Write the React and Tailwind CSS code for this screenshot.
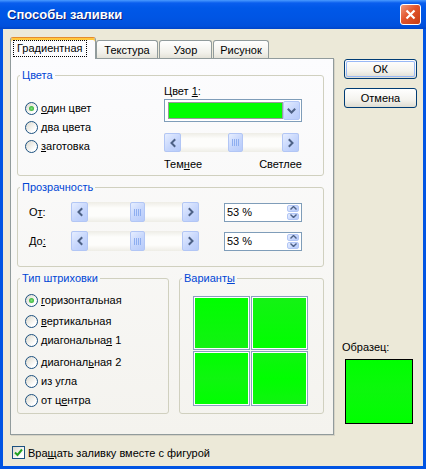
import React from 'react';

const blueBtn =
  'bg-[linear-gradient(135deg,#e6eeff,#c6d6fc_55%,#b7cbfa)] border border-[#b2c6f5] rounded-[2px]';

function Chevron({ dir }) {
  const d = {
    left: 'M6.5 3 L3.5 6 L6.5 9',
    right: 'M3.5 3 L6.5 6 L3.5 9',
    down: 'M2.5 4.5 L5.5 7.5 L8.5 4.5',
  }[dir];
  const w = dir === 'down' ? 11 : 10;
  return (
    <svg width={w} height="12" viewBox={`0 0 ${w} 12`}>
      <path d={d} fill="none" stroke="#4d6185" strokeWidth="2" strokeLinecap="square" />
    </svg>
  );
}

function ArrowBtn({ dir }) {
  return (
    <div className={`w-[17px] h-full flex items-center justify-center ${blueBtn}`}>
      <Chevron dir={dir} />
    </div>
  );
}

function Thumb() {
  return (
    <div className={`w-[15px] h-full flex items-center justify-center gap-[1px] ${blueBtn}`}>
      <span className="w-[1px] h-[7px] bg-[#8eaef0]" />
      <span className="w-[1px] h-[7px] bg-[#8eaef0]" />
      <span className="w-[1px] h-[7px] bg-[#8eaef0]" />
      <span className="w-[1px] h-[7px] bg-[#8eaef0]" />
    </div>
  );
}

function Slider({ size, offset }) {
  return (
    <div
      className={`flex ${size} bg-[linear-gradient(180deg,#eeede6,#fdfdfb_30%,#fdfdfb_70%,#eeede6)]`}
    >
      <ArrowBtn dir="left" />
      <div className="flex-1 flex">
        <div className={`h-full ${offset}`}>
          <Thumb />
        </div>
      </div>
      <ArrowBtn dir="right" />
    </div>
  );
}

function Spin({ className = '' }) {
  return (
    <div
      className={`w-[78px] h-[19px] border border-[#7f9db9] bg-white flex items-center pl-[2px] pr-[2px] ${className}`}
    >
      <span className="flex-1">53 %</span>
      <div className="w-[12px] h-[15px] flex flex-col gap-[1px]">
        <div className={`flex-1 flex items-center justify-center ${blueBtn}`}>
          <svg width="7" height="4" viewBox="0 0 7 4">
            <path d="M0.5 3.5 L3.5 0.5 L6.5 3.5" fill="none" stroke="#4d6185" strokeWidth="1.4" />
          </svg>
        </div>
        <div className={`flex-1 flex items-center justify-center ${blueBtn}`}>
          <svg width="7" height="4" viewBox="0 0 7 4">
            <path d="M0.5 0.5 L3.5 3.5 L6.5 0.5" fill="none" stroke="#4d6185" strokeWidth="1.4" />
          </svg>
        </div>
      </div>
    </div>
  );
}

function Radio({ checked, children, className = '' }) {
  return (
    <div className={`flex items-center h-[14px] ${className}`}>
      <span className="w-[13px] h-[13px] rounded-full border border-[#1c5180] bg-[linear-gradient(135deg,#dcd9cd,#ffffff_75%)] flex items-center justify-center">
        {checked && (
          <span className="w-[5px] h-[5px] rounded-full bg-[radial-gradient(circle,#7ce27a,#21a121)]" />
        )}
      </span>
      <span className="ml-[3px]">{children}</span>
    </div>
  );
}

function Group({ title, className = '', children }) {
  return (
    <fieldset className={`border border-[#d0d0bf] rounded-[3px] ${className}`}>
      <legend className="ml-[2px] px-[2px] leading-[13px] text-[#0046d5]">{title}</legend>
      {children}
    </fieldset>
  );
}

function Btn({ children, isDefault }) {
  return (
    <div className="w-[73px] h-[20px] rounded-[3px] border border-[#003c74] bg-[linear-gradient(180deg,#ffffff,#f4f3ee_60%,#dedcd1)] p-[1px]">
      <div
        className={`w-full h-full rounded-[2px] flex items-center justify-center ${
          isDefault ? 'shadow-[inset_0_0_0_1px_#98b8f6]' : ''
        }`}
      >
        {children}
      </div>
    </div>
  );
}

function Cell({ grad }) {
  return (
    <div className="border border-[#8a9fc0] bg-white p-[1px]">
      <div className={`w-full h-full ${grad}`} />
    </div>
  );
}

const U = ({ children }) => <span className="underline">{children}</span>;

export default function App() {
  return (
    <div className="w-[426px] h-[469px] flex flex-col bg-[#0054e3] font-['Liberation_Sans',Arial,sans-serif] text-[11px] leading-[14px] text-black">
      {/* title bar */}
      <div className="h-[29px] shrink-0 flex items-center justify-between pl-[7px] pr-[5px] bg-[linear-gradient(180deg,#4a9bff_0px,#0a5eee_3px,#0058e8_8px,#0055e4_60%,#0050dc_90%,#0044c8)]">
        <span className="text-white font-bold text-[13px] [text-shadow:1px_1px_0_#0a1f7a]">
          Способы заливки
        </span>
        <div className="w-[21px] h-[21px] rounded-[3px] border border-white bg-[linear-gradient(135deg,#f09a7c,#e2542c_45%,#c63c14)] flex items-center justify-center">
          <svg width="11" height="11" viewBox="0 0 11 11">
            <path d="M1.5 1.5 L9.5 9.5 M9.5 1.5 L1.5 9.5" stroke="white" strokeWidth="2.2" />
          </svg>
        </div>
      </div>

      {/* client */}
      <div className="flex-1 mx-[3px] mb-[3px] bg-[#ece9d8] flex">
        <div className="pl-[7px] pt-[8px] flex flex-col">
          {/* tabs */}
          <div className="flex items-end h-[21px]">
            <div className="relative z-10 -mb-[1px] w-[86px] h-[22px] rounded-t-[3px] border-x border-[#919b9c] border-t border-t-[#e68b2c] shadow-[inset_0_2px_0_#ffc73c] bg-[#fcfcfe] flex items-start pt-[3px] pl-[3px]">
              <span className="px-[3px] h-[15px] leading-[15px] outline outline-1 outline-dotted outline-black">
                Градиентная
              </span>
            </div>
            <div className="w-[62px] h-[18px] rounded-t-[3px] border-x border-t border-[#919b9c] bg-[linear-gradient(180deg,#ffffff,#f1f0ea_70%,#e4e2d8)] flex items-center justify-center">
              Текстура
            </div>
            <div className="ml-[1px] w-[53px] h-[18px] rounded-t-[3px] border-x border-t border-[#919b9c] bg-[linear-gradient(180deg,#ffffff,#f1f0ea_70%,#e4e2d8)] flex items-center justify-center">
              Узор
            </div>
            <div className="ml-[1px] w-[56px] h-[18px] rounded-t-[3px] border-x border-t border-[#919b9c] bg-[linear-gradient(180deg,#ffffff,#f1f0ea_70%,#e4e2d8)] flex items-center justify-center">
              Рисунок
            </div>
          </div>

          {/* panel */}
          <div className="w-[324px] h-[377px] border border-[#919b9c] shadow-[1px_1px_0_#d6d3c6] bg-[linear-gradient(180deg,#fcfcfe,#f4f3ee)] pt-[10px] pl-[6px] pr-[9px]">
            <Group title="Цвета" className="h-[107px]">
              <div className="flex">
                <div className="w-[146px] pl-[7px] pt-[19px] flex flex-col gap-[5px]">
                  <Radio checked>
                    <U>о</U>дин цвет
                  </Radio>
                  <Radio>
                    <U>д</U>ва цвета
                  </Radio>
                  <Radio>
                    <U>з</U>аготовка
                  </Radio>
                </div>
                <div className="w-[138px] pt-[2px] flex flex-col">
                  <span className="h-[14px]">
                    Цвет <U>1</U>:
                  </span>
                  <div className="mt-[1px] h-[23px] border border-[#7f9db9] bg-white flex items-center pl-[3px] pr-[1px]">
                    <div className="w-[116px] h-[17px] border border-[#9a9a9a] bg-[#00ff00]" />
                    <div className={`ml-auto w-[17px] h-[19px] flex items-center justify-center ${blueBtn}`}>
                      <Chevron dir="down" />
                    </div>
                  </div>
                  <div className="mt-[11px]">
                    <Slider size="w-[135px] h-[19px]" offset="ml-[47px]" />
                  </div>
                  <div className="mt-[5px] h-[14px] flex justify-between">
                    <span>
                      Тем<U>н</U>ее
                    </span>
                    <span>Светлее</span>
                  </div>
                </div>
              </div>
            </Group>

            <Group title="Прозрачность" className="h-[86px] mt-[5px]">
              <div className="flex items-center pl-[11px] mt-[8px]">
                <span className="w-[42px]">
                  О<U>т</U>:
                </span>
                <Slider size="w-[128px] h-[20px]" offset="ml-[42px]" />
                <Spin className="ml-[25px]" />
              </div>
              <div className="flex items-center pl-[11px] mt-[9px]">
                <span className="w-[42px]">
                  До<U>:</U>
                </span>
                <Slider size="w-[128px] h-[20px]" offset="ml-[42px]" />
                <Spin className="ml-[25px]" />
              </div>
            </Group>

            <div className="flex mt-[5px] gap-[10px]">
              <Group title="Тип штриховки" className="w-[152px] h-[142px]">
                <div className="pl-[7px] flex flex-col">
                  <Radio checked className="mt-[8px]">
                    <U>г</U>оризонтальная
                  </Radio>
                  <Radio className="mt-[7px]">
                    <U>в</U>ертикальная
                  </Radio>
                  <Radio className="mt-[5px]">
                    диагональна<U>я</U> 1
                  </Radio>
                  <Radio className="mt-[8px]">
                    диагонал<U>ь</U>ная 2
                  </Radio>
                  <Radio className="mt-[5px]">из угла</Radio>
                  <Radio className="mt-[5px]">
                    от ц<U>е</U>нтра
                  </Radio>
                </div>
              </Group>
              <Group
                title={
                  <>
                    Вариант<U>ы</U>
                  </>
                }
                className="w-[145px] h-[142px]"
              >
                <div className="pl-[13px] mt-[11px] grid grid-cols-[57px_57px] grid-rows-[54px_55px] gap-[1px]">
                  <Cell grad="bg-[linear-gradient(180deg,#00ff00,#12f212)]" />
                  <Cell grad="bg-[linear-gradient(180deg,#14f214,#00ff00)]" />
                  <Cell grad="bg-[linear-gradient(180deg,#00ff00,#0ff60f_50%,#00ff00)]" />
                  <Cell grad="bg-[linear-gradient(180deg,#10f410,#00ff00_50%,#10f410)]" />
                </div>
              </Group>
            </div>
          </div>

          {/* checkbox */}
          <div className="mt-[11px] ml-[2px] flex items-center h-[13px]">
            <span className="w-[13px] h-[13px] border border-[#1c5180] bg-[linear-gradient(135deg,#dcd9cd,#ffffff_75%)] flex items-center justify-center">
              <svg width="9" height="9" viewBox="0 0 9 9">
                <path d="M1 4.5 L3.5 7 L8 1.5" fill="none" stroke="#21a121" strokeWidth="2" />
              </svg>
            </span>
            <span className="ml-[3px]">
              Вра<U>щ</U>ать заливку вместе с фигурой
            </span>
          </div>
        </div>

        {/* right column */}
        <div className="ml-[10px] pt-[30px] flex flex-col">
          <Btn isDefault>ОК</Btn>
          <div className="mt-[9px]">
            <Btn>Отмена</Btn>
          </div>
          <span className="mt-[232px] -ml-[2px] h-[14px]">Образец:</span>
          <div className="mt-[5px] ml-[1px] w-[68px] h-[65px] border border-black bg-[linear-gradient(180deg,#00ff00,#0cf80c_50%,#00ff00)]" />
        </div>
      </div>
    </div>
  );
}
